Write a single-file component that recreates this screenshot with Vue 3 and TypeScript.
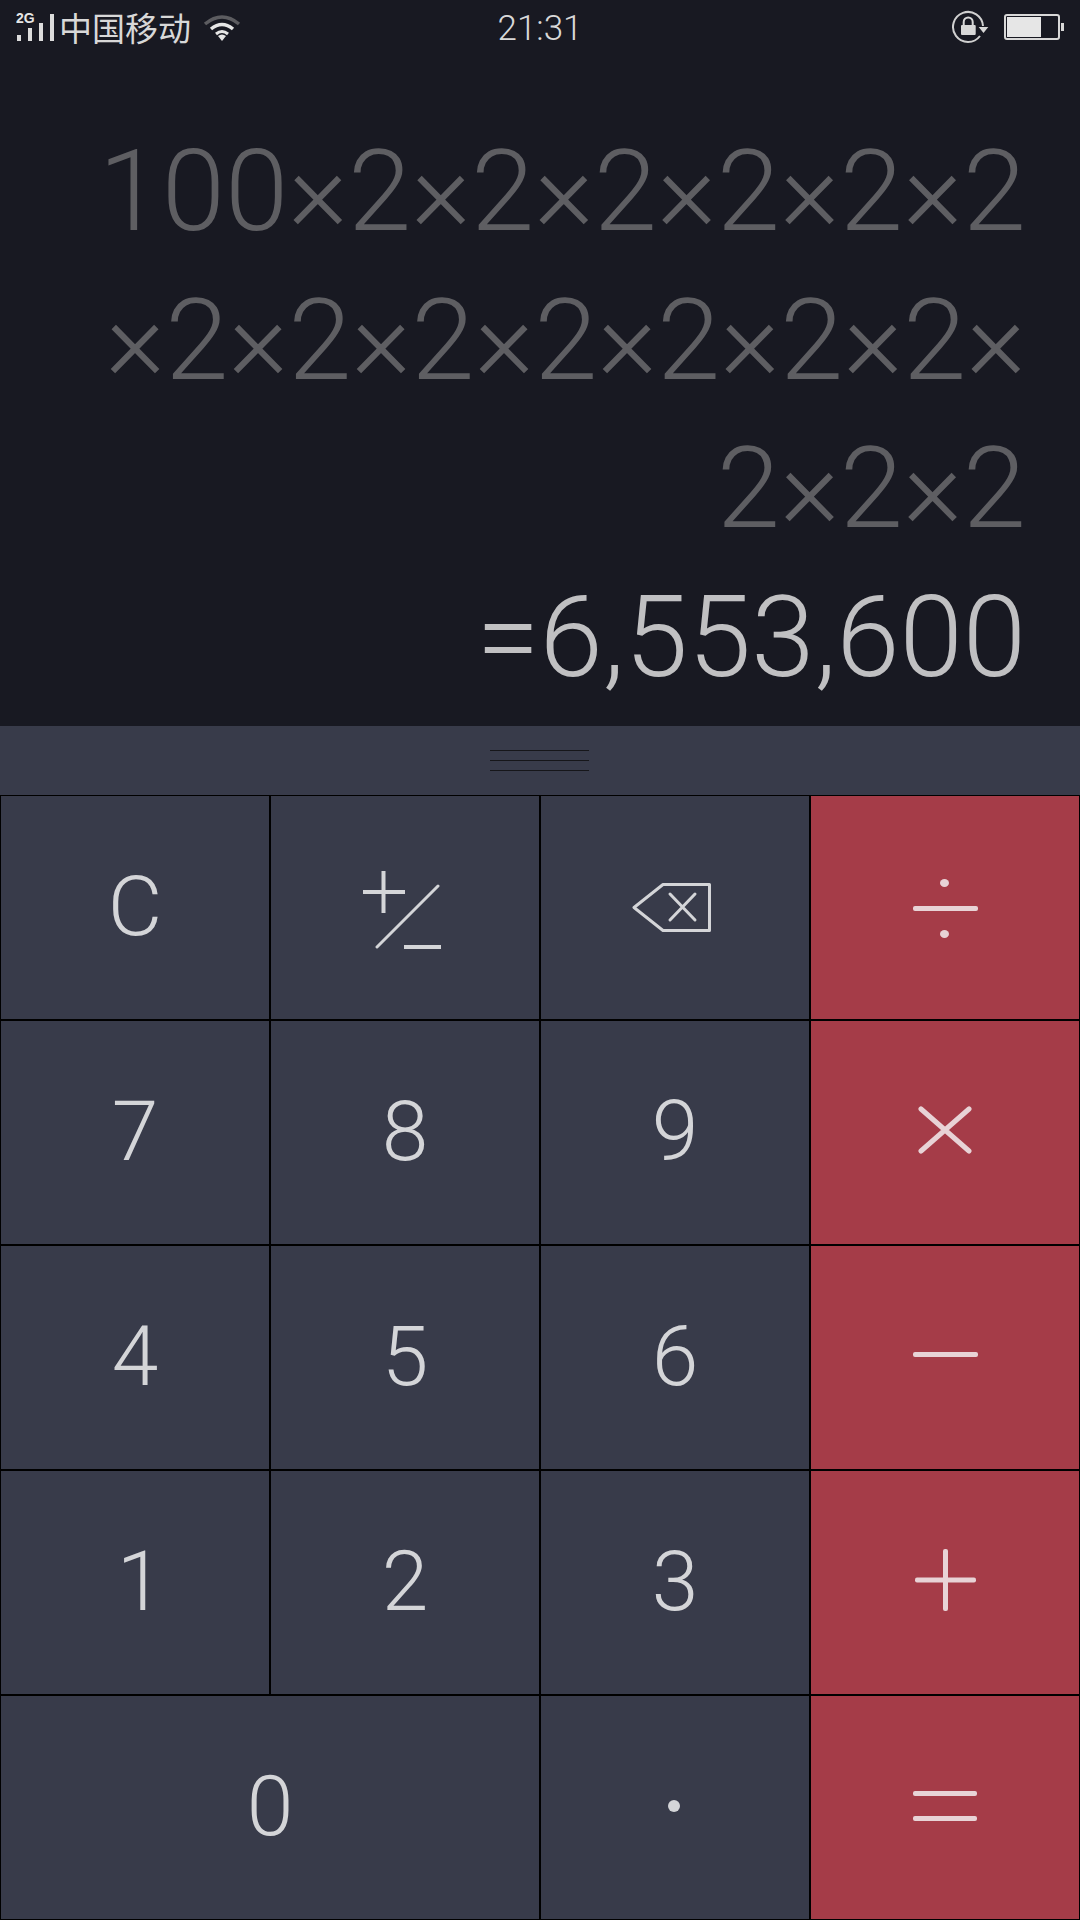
<script setup lang="ts">
type Key = { label?: string; icon?: string; wide?: boolean; op?: boolean }

const expression = ['100×2×2×2×2×2×2', '×2×2×2×2×2×2×2×', '2×2×2']
const result = '=6,553,600'

const keys: Key[] = [
  { label: 'C' },
  { icon: 'sign' },
  { icon: 'back' },
  { icon: 'div', op: true },
  { label: '7' },
  { label: '8' },
  { label: '9' },
  { icon: 'mul', op: true },
  { label: '4' },
  { label: '5' },
  { label: '6' },
  { icon: 'sub', op: true },
  { label: '1' },
  { label: '2' },
  { label: '3' },
  { icon: 'add', op: true },
  { label: '0', wide: true },
  { icon: 'dot' },
  { icon: 'eq', op: true },
]
</script>

<template>
  <div class="calc">
    <div class="status">
      <div class="status-left">
        <svg class="signal" width="42" height="36" viewBox="0 0 42 36">
          <text x="0" y="14" class="net">2G</text>
          <rect x="1" y="26" width="4" height="6" />
          <rect x="12" y="19" width="4" height="13" />
          <rect x="23" y="14" width="4" height="18" />
          <rect x="34" y="5" width="4" height="27" />
        </svg>
        <span class="carrier">中国移动</span>
        <svg class="wifi" width="38" height="27" viewBox="0 0 38 27" fill="none">
          <path d="M2 10 Q19 -4 36 10" stroke="#5c5c60" stroke-width="3.500" />
          <path d="M8 15 Q19 6 30 15" stroke="#e6e6e6" stroke-width="3.500" />
          <path d="M13 20 Q19 15 25 20" stroke="#e6e6e6" stroke-width="3" />
          <path d="M15 22 L19 27 L23 22 Q19 19 15 22Z" fill="#e6e6e6" />
        </svg>
      </div>
      <span class="clock">21:31</span>
      <div class="status-right">
        <svg width="40" height="34" viewBox="0 0 40 34" fill="none">
          <path d="M33 16 A15 15 0 1 0 30 26" stroke="#d0d0d0" stroke-width="2" />
          <path d="M28.700 17 H38.300 L33.500 23Z" fill="#d8d8d8" />
          <rect x="11" y="15" width="14.700" height="10" rx="1" fill="#d8d8d8" />
          <path d="M13.700 15 V12 a4.500 4.500 0 0 1 9 0 V15" stroke="#d8d8d8" stroke-width="2" />
        </svg>
        <div class="battery">
          <div class="battery-body"><div class="battery-fill"></div></div>
          <div class="battery-tip"></div>
        </div>
      </div>
    </div>

    <div class="display">
      <div v-for="line in expression" :key="line" class="expr">{{ line }}</div>
      <div class="result">{{ result }}</div>
    </div>

    <div class="handle">
      <div class="grip"><i></i><i></i><i></i></div>
    </div>

    <div class="pad">
      <div
        v-for="(key, i) in keys"
        :key="i"
        class="key"
        :class="{ wide: key.wide, op: key.op }"
      >
        <span v-if="key.label" class="digit" :class="{ one: key.label === '1' }">{{ key.label }}</span>
        <svg v-else-if="key.icon === 'sign'" class="ic-sign" width="78" height="78" viewBox="0 0 78 78" fill="none" stroke="#d4d5d8">
          <path d="M20.500 0 V42 M0 21 H42" stroke-width="4" />
          <path d="M14 76 L75 15" stroke-width="3" stroke-linecap="round" />
          <path d="M41 76 H78" stroke-width="4" />
        </svg>
        <svg v-else-if="key.icon === 'back'" class="ic-back" width="81" height="51" viewBox="0 0 81 51" fill="none" stroke="#d4d5d8" stroke-width="3" stroke-linejoin="round" stroke-linecap="round">
          <path d="M2 25.500 L31 2.500 H77.500 V48.500 H31 Z" />
          <path d="M38 12 L63 38 M63 12 L38 38" />
        </svg>
        <svg v-else-if="key.icon === 'div'" class="ic-div" width="65" height="59" viewBox="0 0 65 59" fill="#e8d3d6">
          <ellipse cx="31.500" cy="4" rx="4.500" ry="4" />
          <rect x="0" y="27" width="65" height="5" rx="2" />
          <ellipse cx="31.500" cy="55" rx="4.500" ry="4" />
        </svg>
        <svg v-else-if="key.icon === 'mul'" width="54" height="48" viewBox="0 0 54 48" fill="none" stroke="#e8d3d6" stroke-width="5" stroke-linecap="round">
          <path d="M3 3 L51 45 M51 3 L3 45" />
        </svg>
        <svg v-else-if="key.icon === 'sub'" width="65" height="5" viewBox="0 0 65 5" fill="#e8d3d6">
          <rect x="0" y="0" width="65" height="5" rx="2" />
        </svg>
        <svg v-else-if="key.icon === 'add'" width="61" height="62" viewBox="0 0 61 62" fill="#e8d3d6">
          <rect x="0" y="28.500" width="61" height="5" rx="2" />
          <rect x="28" y="0" width="5" height="62" rx="2" />
        </svg>
        <svg v-else-if="key.icon === 'eq'" class="ic-eq" width="64" height="31" viewBox="0 0 64 31" fill="#e8d3d6">
          <rect x="0" y="0" width="64" height="5" rx="2" />
          <rect x="0" y="25" width="64" height="5" rx="2" />
        </svg>
        <svg v-else-if="key.icon === 'dot'" class="ic-dot" width="12" height="12" viewBox="0 0 12 12" fill="#d4d5d8">
          <circle cx="6" cy="6" r="6" />
        </svg>
      </div>
    </div>
  </div>
</template>

<style>
html,
body {
  margin: 0;
  background: #000;
}
</style>

<style scoped>
.calc {
  width: 1080px;
  height: 1920px;
  display: flex;
  flex-direction: column;
  background: #181922;
  font-family: Roboto, "Noto Sans CJK SC", sans-serif;
  overflow: hidden;
}

.status {
  height: 56px;
  box-sizing: border-box;
  padding: 0 16px 2px 16px;
  display: flex;
  align-items: center;
  justify-content: space-between;
  position: relative;
  color: #d8d8d8;
}

.status-left,
.status-right {
  display: flex;
  align-items: center;
}

.signal rect {
  fill: #dcdcdc;
}

.net {
  font-size: 14px;
  font-weight: 700;
  fill: #e6e6e6;
  font-family: "Liberation Sans", sans-serif;
}

.carrier {
  font-size: 33px;
  margin-left: 1px;
  font-family: "Noto Sans CJK SC", sans-serif;
  font-weight: 400;
  line-height: 40px;
}

.wifi {
  margin-left: 12px;
}

.clock {
  position: absolute;
  left: 0;
  right: 0;
  margin-top: 2px;
  text-align: center;
  font-size: 35px;
  font-weight: 300;
}

.status-right {
  gap: 14px;
}

.battery {
  display: flex;
  align-items: center;
  gap: 1px;
}

.battery-body {
  box-sizing: border-box;
  width: 56px;
  height: 26px;
  border: 2px solid #d8d8d8;
  border-radius: 3px;
  padding: 1px;
}

.battery-fill {
  width: 34px;
  height: 100%;
  background: #e6e6e6;
}

.battery-tip {
  width: 3px;
  height: 8px;
  background: #d8d8d8;
}

.display {
  height: 670px;
  box-sizing: border-box;
  padding: 61px 54px 0 0;
  text-align: right;
}

.expr,
.result {
  height: 148.5px;
  line-height: 148.5px;
  font-size: 114px;
  font-weight: 300;
  white-space: nowrap;
}

.expr {
  color: #5e5e62;
}

.result {
  color: #c0c0c2;
}

.handle {
  height: 69px;
  background: #383b4a;
  display: flex;
  align-items: center;
  justify-content: center;
}

.grip {
  width: 99px;
  margin-right: 2px;
  display: flex;
  flex-direction: column;
  gap: 9px;
}

.grip i {
  display: block;
  height: 1px;
  background: #16161a;
}

.pad {
  display: grid;
  grid-template-columns: repeat(4, 270px);
  grid-template-rows: repeat(5, 225px);
}

.key {
  box-sizing: border-box;
  padding-bottom: 6px;
  background: #383b4a;
  border: 1px solid #000;
  display: flex;
  align-items: center;
  justify-content: center;
  color: #d4d5d8;
  font-size: 84px;
  font-weight: 300;
}

.key.wide {
  grid-column: span 2;
}

.key.op {
  background: #a53c48;
}

.digit {
  margin-top: 3px;
}

.digit.one {
  margin-left: 10px;
}

.ic-sign {
  margin: 11px 6px 0 0;
}

.ic-back {
  margin: 6px 5px 0 0;
}

.ic-div {
  margin-top: 8px;
}

.ic-eq {
  margin-top: 3px;
}

.ic-dot {
  margin: 3px 2px 0 0;
}
</style>
